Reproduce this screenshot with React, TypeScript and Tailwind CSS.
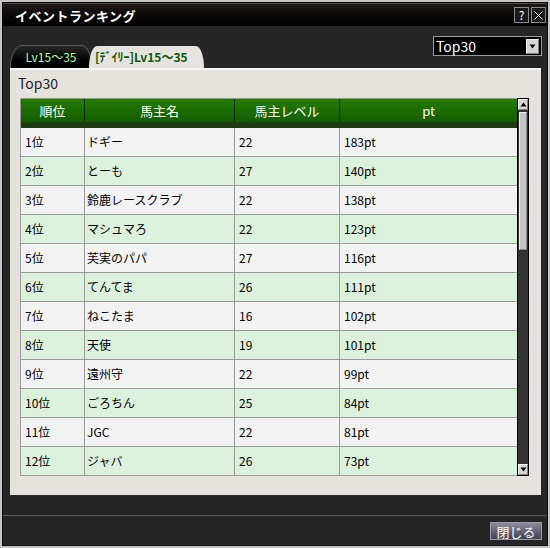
import React from "react";

const rows: [string, string, string, string][] = [
  ["1位", "ドギー", "22", "183pt"],
  ["2位", "とーも", "27", "140pt"],
  ["3位", "鈴鹿レースクラブ", "22", "138pt"],
  ["4位", "マシュマろ", "22", "123pt"],
  ["5位", "芙実のパパ", "27", "116pt"],
  ["6位", "てんてま", "26", "111pt"],
  ["7位", "ねこたま", "16", "102pt"],
  ["8位", "天使", "19", "101pt"],
  ["9位", "遠州守", "22", "99pt"],
  ["10位", "ごろちん", "25", "84pt"],
  ["11位", "JGC", "22", "81pt"],
  ["12位", "ジャバ", "26", "73pt"],
];

const font = { fontFamily: '"Noto Sans CJK JP", "Noto Sans", sans-serif' };

function UpTri() {
  return (
    <svg width="7" height="5" viewBox="0 0 7 5">
      <path d="M3.5 0.5 L6.5 4.5 L0.5 4.5 Z" fill="#000" />
    </svg>
  );
}
function DownTri() {
  return (
    <svg width="7" height="5" viewBox="0 0 7 5">
      <path d="M0.5 0.5 L6.5 0.5 L3.5 4.5 Z" fill="#000" />
    </svg>
  );
}

export default function App() {
  return (
    <div
      className="w-[550px] h-[548px] border-2 border-[#c4c4c4] bg-[#262626] flex flex-col overflow-hidden"
      style={font}
    >
      <div className="flex flex-col flex-1 border border-[#0e0e0e]">
        {/* Title bar */}
        <div className="h-[23px] flex items-center justify-between bg-gradient-to-b from-[#1d1714] to-[#020202] border-t border-[#4a4a4a]">
          <span className="pl-[12px] text-white text-[13px] font-bold leading-none tracking-[0.5px]">
            イベントランキング
          </span>
          <div className="flex gap-[2px] pr-[1px]">
            <div className="w-[15px] h-[16px] border border-[#8a8a8a] bg-[#1a1a1a] text-white text-[12px] leading-none flex items-center justify-center">
              ?
            </div>
            <div className="w-[15px] h-[16px] border border-[#8a8a8a] bg-[#1a1a1a] flex items-center justify-center">
              <svg width="9" height="9" viewBox="0 0 9 9">
                <path d="M0.5 0.5 L8.5 8.5 M8.5 0.5 L0.5 8.5" stroke="#fff" strokeWidth="1" />
              </svg>
            </div>
          </div>
        </div>

        {/* Tabs + dropdown */}
        <div className="h-[42px] flex items-end justify-between pl-[7px] pr-[5px] relative">
          <div className="flex items-end">
            <div className="w-[82px] h-[23px] bg-gradient-to-b from-[#2a2a2a] to-[#000] border-t border-l border-r border-[#5a5a5a] rounded-tl-[12px_22px] rounded-tr-[10px_22px] flex items-center justify-center text-[#a8ffa8] text-[12px] leading-none pb-[1px]">
              Lv15～35
            </div>
            <div className="-ml-[3px] w-[115px] h-[22px] bg-[#e6e2de] rounded-tl-[8px_22px] rounded-tr-[8px_22px] flex items-center pl-[6px] text-[#0a5a00] text-[12px] font-bold leading-none">
              [ﾃﾞｲﾘｰ]Lv15～35
            </div>
          </div>
          <div className="self-start mt-[10px] w-[109px] h-[20px] border border-[#9a9a9a] bg-black flex items-center justify-between pl-[2px] pr-[2px]">
            <span className="text-white text-[14px] leading-none">Top30</span>
            <div className="w-[13px] h-[15px] bg-[#d6d4d0] border border-[#f4f4f4] border-r-[#808080] border-b-[#808080] flex items-center justify-center">
              <DownTri />
            </div>
          </div>
        </div>

        {/* Panel */}
        <div className="mx-[7px] mr-[6px] h-[427px] bg-[#e5e1dd] border-t-2 border-[#f6f6f6] flex flex-col">
          <div className="h-[28px] pl-[8px] pt-[6px] text-[#222] text-[14px] leading-none">Top30</div>
          <div className="flex ml-[10px]">
            <div className="w-[497px] border-l border-t border-[#9a9a9a]">
              {/* header */}
              <div className="grid grid-cols-[64px_150px_105px_177px] h-[29px] bg-gradient-to-b from-[#237c05] to-[#145c00] border-b-[6px] border-[#1d3c0f]">
                {["順位", "馬主名", "馬主レベル", "pt"].map((h, i) => (
                  <div
                    key={h}
                    className={
                      "flex items-center justify-center text-white text-[13px] leading-none " +
                      (i < 3 ? "border-r border-[#0c2a04]" : "")
                    }
                  >
                    {h}
                  </div>
                ))}
              </div>
              {rows.map((r, idx) => (
                <div
                  key={r[0]}
                  className={
                    "grid grid-cols-[64px_150px_105px_177px] h-[29px] border-b border-[#9a9a9a] text-black text-[12px] leading-none " +
                    (idx % 2 === 0 ? "bg-[#f2f2f2]" : "bg-[#dcf1dc]")
                  }
                >
                  <div className="flex items-center pl-[4px] border-r border-[#9a9a9a]">{r[0]}</div>
                  <div className="flex items-center pl-[2px] border-r border-[#9a9a9a]">{r[1]}</div>
                  <div className="flex items-center pl-[4px] border-r border-[#9a9a9a]">{r[2]}</div>
                  <div className="flex items-center pl-[4px]">{r[3]}</div>
                </div>
              ))}
            </div>
            {/* scrollbar */}
            <div className="w-[12px] h-[378px] bg-[#333] border border-black flex flex-col justify-between">
              <div className="flex flex-col">
                <div className="h-[11px] bg-[#d6d4d0] border border-[#f4f4f4] border-r-[#808080] border-b-[#808080] flex items-center justify-center">
                  <UpTri />
                </div>
                <div className="mt-[2px] mx-[1px] h-[138px] bg-[#c4c4c4] border border-[#eeeeee] border-r-[#8a8a8a] border-b-[#8a8a8a]" />
              </div>
              <div className="h-[11px] bg-[#d6d4d0] border border-[#f4f4f4] border-r-[#808080] border-b-[#808080] flex items-center justify-center">
                <DownTri />
              </div>
            </div>
          </div>
        </div>

        {/* Footer */}
        <div className="h-[20px]" />
        <div className="border-t border-[#5a5a5a] flex-1 flex items-start justify-end pr-[5px] pt-[6px]">
          <div className="w-[52px] h-[18px] bg-gradient-to-b from-[#8e8c9c] to-[#44424f] border border-[#9a98a8] flex items-center justify-center text-white text-[13px] leading-none">
            閉じる
          </div>
        </div>
      </div>
    </div>
  );
}
